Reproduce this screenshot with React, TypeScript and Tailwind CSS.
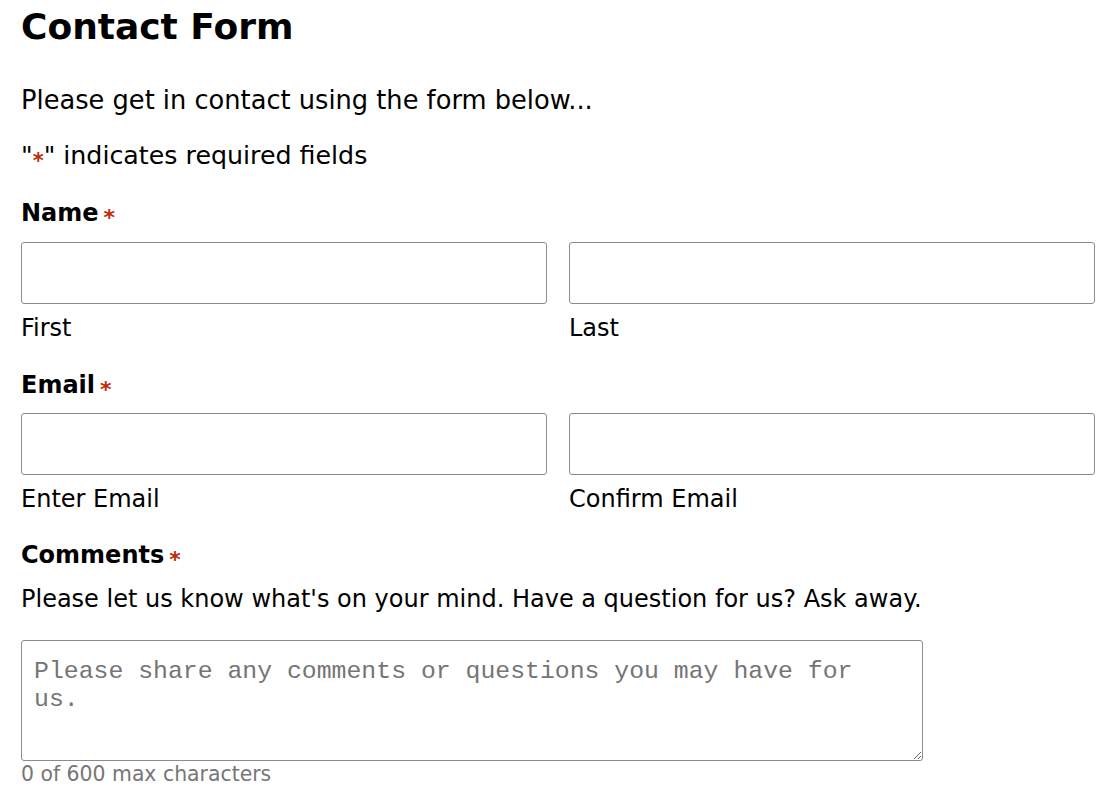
import React, { useState } from "react";

const MAX = 600;

function Req() {
  return (
    <span className="ml-[5px] text-[22px] font-bold leading-none text-[#c02b0a] align-[-4px]">*</span>
  );
}

function Field({ sub }: { sub: string }) {
  return (
    <div className="flex flex-col">
      <input
        type="text"
        className="h-[62px] w-full rounded-[3px] border border-[#8c8c8c] bg-white px-3 text-[22px] focus:outline-none"
      />
      <label className="mt-[8px] text-[24px] leading-[32px] text-black">{sub}</label>
    </div>
  );
}

export default function App() {
  const [comments, setComments] = useState("");

  return (
    <div className="min-h-screen bg-white px-[21px] pt-[5px] font-['DejaVu_Sans',sans-serif] text-black">
      <h1 className="text-[36px] font-bold leading-[44px]">Contact Form</h1>

      <p className="mt-[33px] text-[25.7px] leading-[36px]">
        Please get in contact using the form below...
      </p>
      <p className="mt-[20px] text-[25.3px] leading-[36px]">
        "<span className="text-[21px] font-bold leading-none text-[#c02b0a] align-[-4px]">*</span>" indicates
        required fields
      </p>

      <form className="mt-[23px] flex flex-col">
        <div className="text-[24px] font-bold leading-[32px]">
          Name
          <Req />
        </div>
        <div className="mt-[13px] grid grid-cols-2 gap-[22px]">
          <Field sub="First" />
          <Field sub="Last" />
        </div>

        <div className="mt-[25px] text-[24px] font-bold leading-[32px]">
          Email
          <Req />
        </div>
        <div className="mt-[12px] grid grid-cols-2 gap-[22px]">
          <Field sub="Enter Email" />
          <Field sub="Confirm Email" />
        </div>

        <div className="mt-[24px] text-[24px] font-bold leading-[32px]">
          Comments
          <Req />
        </div>
        <p className="mt-[12px] text-[24px] leading-[32px]">
          Please let us know what's on your mind. Have a question for us? Ask away.
        </p>
        <textarea
          value={comments}
          maxLength={MAX}
          onChange={(e) => setComments(e.target.value)}
          placeholder="Please share any comments or questions you may have for us."
          className="mt-[25px] h-[121px] w-[902px] resize-y rounded-[3px] border border-[#8c8c8c] px-[12px] py-[16px] font-['Liberation_Mono',monospace] text-[24.8px] leading-[28px] text-black placeholder:text-[#757575] focus:outline-none"
        />
        <div className="text-[20.4px] leading-[26px] text-[#767676]">
          {comments.length} of {MAX} max characters
        </div>
      </form>
    </div>
  );
}
